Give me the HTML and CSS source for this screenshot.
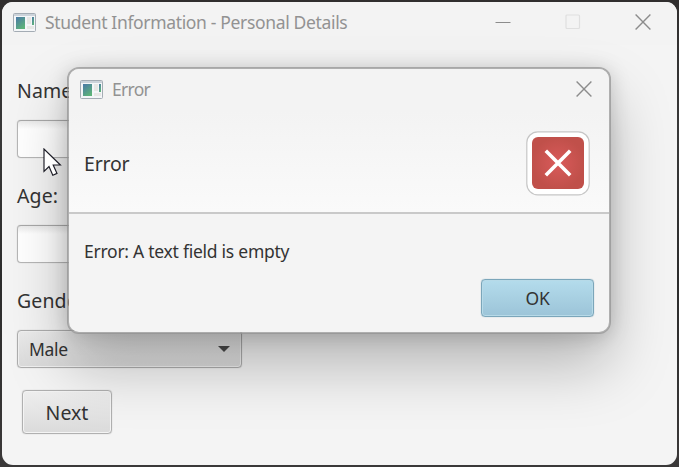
FILE: index.html
```html
<!DOCTYPE html>
<html lang="en">
<head>
<meta charset="utf-8">
<title>Student Information - Personal Details</title>
<link rel="stylesheet" href="styles.css">
</head>
<body>
<svg width="0" height="0" class="defs" aria-hidden="true">
  <defs>
    <linearGradient id="pane" x1="0" y1="0" x2="0.6" y2="1"><stop offset="0" stop-color="#4a78a8"/><stop offset="1" stop-color="#5db27a"/></linearGradient>
    <radialGradient id="red"><stop offset="0" stop-color="#d95a5a"/><stop offset="1" stop-color="#c0504a"/></radialGradient>
    <symbol id="app" viewBox="0 0 23 19">
      <rect x=".5" y=".5" width="22" height="18" rx="1" fill="#f4f6f8" stroke="#a4acb4"/>
      <path d="M1 2h21" stroke="#ccd3da" stroke-width="2"/>
      <rect x="3" y="4" width="9" height="12" fill="url(#pane)"/>
      <rect x="14" y="4" width="4" height="7" fill="#e7e7e5"/>
      <rect x="19" y="4" width="2" height="8" fill="url(#pane)"/>
      <rect x="14" y="13" width="7" height="3" fill="#e7e7e5"/>
    </symbol>
    <symbol id="close" viewBox="0 0 16 16"><path d="M.6.6l14.8 14.8M15.4.6L.6 15.4" stroke="#8c8c8c" stroke-width="1.4"/></symbol>
  </defs>
</svg>
<main class="window">
  <header class="titlebar">
    <svg class="app-icon"><use href="#app"/></svg>
    <span class="title title-main">Student Information - Personal Details</span>
    <div class="controls">
      <svg width="16" height="16"><path d="M.5 8.5h15" stroke="#8c8c8c"/></svg>
      <svg width="16" height="16"><rect x="1" y="1" width="13.5" height="13.5" rx="1" fill="none" stroke="#dfdfdf" stroke-width="1.2"/></svg>
      <svg width="16" height="16"><use href="#close"/></svg>
    </div>
  </header>
  <form class="form">
    <label class="label">Name:</label>
    <div class="field"></div>
    <label class="label">Age:</label>
    <div class="field"></div>
    <label class="label">Gender:</label>
    <div class="combo"><span>Male</span><svg width="12" height="6"><path d="M0 0h12L6 6z" fill="#4a4a4a"/></svg></div>
    <button type="button" class="next"><span>Next</span></button>
  </form>
</main>
<section class="dialog">
  <header class="dialog-title">
    <svg class="app-icon"><use href="#app"/></svg>
    <span class="title title-dialog">Error</span>
    <svg class="dialog-close" width="16" height="16"><use href="#close"/></svg>
  </header>
  <div class="dialog-header">
    <span>Error</span>
    <svg width="64" height="65" viewBox="0 0 64 65">
      <rect x=".8" y=".8" width="62.4" height="63" rx="11" fill="#fff" stroke="#c6c6c6" stroke-width="1.2"/>
      <rect x="6" y="6" width="52" height="52" rx="6" fill="url(#red)"/>
      <path d="M19.8 19.8l24.4 24.4M44.2 19.8L19.8 44.2" stroke="#fff" stroke-width="3.6"/>
    </svg>
  </div>
  <div class="dialog-body">
    <p>Error: A text field is empty</p>
    <button type="button" class="ok"><span>OK</span></button>
  </div>
</section>
<svg class="cursor" width="20" height="29" viewBox="0 0 20 29"><path d="M1 1v22.4l5-4.8 3.8 8.6 4.2-1.8-3.8-8.4h7.2z" fill="#fff" stroke="#1b1b25" stroke-width="1.15"/></svg>
</body>
</html>
```
FILE: styles.css
```css
* { box-sizing: border-box; }
body {
  margin: 0;
  width: 679px;
  height: 467px;
  padding: 2px;
  overflow: hidden;
  background: linear-gradient(#302e2e, #393939 30%, #2c2c2c 60%, #3a3838);
  font-family: "Noto Sans", "Open Sans", sans-serif;
  color: #333;
}
.defs { position: absolute; }
.window {
  width: 675px;
  height: 463px;
  border-radius: 11px;
  background: #f4f4f4;
  overflow: hidden;
}
.titlebar {
  display: flex;
  align-items: center;
  height: 43px;
  padding: 0 26px 3px 11px;
  background: #f3f3f3;
}
.app-icon { width: 23px; height: 19px; flex: none; }
.title { color: #929292; line-height: 24px; white-space: nowrap; margin-left: 9px; }
.title-main { font-size: 17.5px; letter-spacing: -0.34px; }
.title-dialog { font-size: 17.5px; letter-spacing: -0.7px; }
.controls { display: flex; gap: 54px; margin-left: auto; }
.controls svg { display: block; }
.form {
  display: flex;
  flex-direction: column;
  align-items: flex-start;
  padding: 31px 0 0 15px;
}
.label { font-size: 19.5px; line-height: 30px; letter-spacing: 0.1px; }
.field {
  width: 225px;
  height: 38px;
  margin: 14px 0 23px;
  border: 1px solid #b6b6b6;
  border-top-color: #a8a8a8;
  border-radius: 4px;
  background: linear-gradient(#eaeaea, #fff 8px);
  box-shadow: 0 0 1px #b0b0b0;
}
.combo {
  display: flex;
  align-items: center;
  justify-content: space-between;
  width: 225px;
  height: 38px;
  margin-top: 14px;
  padding: 0 11px;
  border: 1px solid #adadad;
  border-radius: 4px;
  background: linear-gradient(#ebebeb, #dadada);
  box-shadow: inset 0 0 0 1px #f0f0f0, 0 0 1px #aaa;
  font-size: 17.5px;
  letter-spacing: -0.3px;
}
.next {
  width: 90px;
  height: 44px;
  margin: 22px 0 0 5px;
  padding: 0;
  border: 1px solid #b0b0b0;
  border-radius: 4px;
  background: linear-gradient(#efefef, #dadada);
  box-shadow: inset 0 0 0 1px #f4f4f4, 0 0 1px #aaa;
  font: 19.5px "Noto Sans", sans-serif;
  color: #333;
}
.dialog {
  position: absolute;
  left: 67px;
  top: 67px;
  width: 544px;
  height: 267px;
  display: flex;
  flex-direction: column;
  border: 2px solid rgba(145, 145, 145, .7);
  border-radius: 12px;
  background: #f4f4f4;
  background-clip: padding-box;
  box-shadow: 0 32px 60px rgba(0, 0, 0, .25), 0 2px 20px rgba(0, 0, 0, .17);
  overflow: hidden;
}
.dialog-title {
  display: flex;
  align-items: center;
  height: 42px;
  padding: 0 17px 2px 11px;
  background: #f3f3f3;
}
.dialog-close { margin-left: auto; }
.dialog-header {
  display: flex;
  align-items: center;
  justify-content: space-between;
  height: 103px;
  padding: 3px 19px 0 15px;
  border-bottom: 2px solid #c9c9c9;
  background: linear-gradient(#f3f3f3, #fafafa);
  font-size: 19.5px;
  letter-spacing: -0.2px;
}
.dialog-body { display: flex; flex-direction: column; padding: 24px 15px 0; }
.dialog-body p {
  margin: 0;
  font-size: 17.5px;
  line-height: 26px;
  letter-spacing: -0.26px;
}
.ok {
  align-self: flex-end;
  width: 113px;
  height: 38px;
  margin-top: 15px;
  padding: 0;
  border: 1px solid #7ba6ba;
  border-radius: 4px;
  background: linear-gradient(#b4dcec, #9cc4d8);
  box-shadow: inset 0 0 0 1px #b7dae8, 0 0 1px #7ba6ba;
  font: 17.5px "Noto Sans", sans-serif;
  letter-spacing: -0.3px;
  color: #333;
}
.cursor { position: absolute; left: 43px; top: 148px; }
```
